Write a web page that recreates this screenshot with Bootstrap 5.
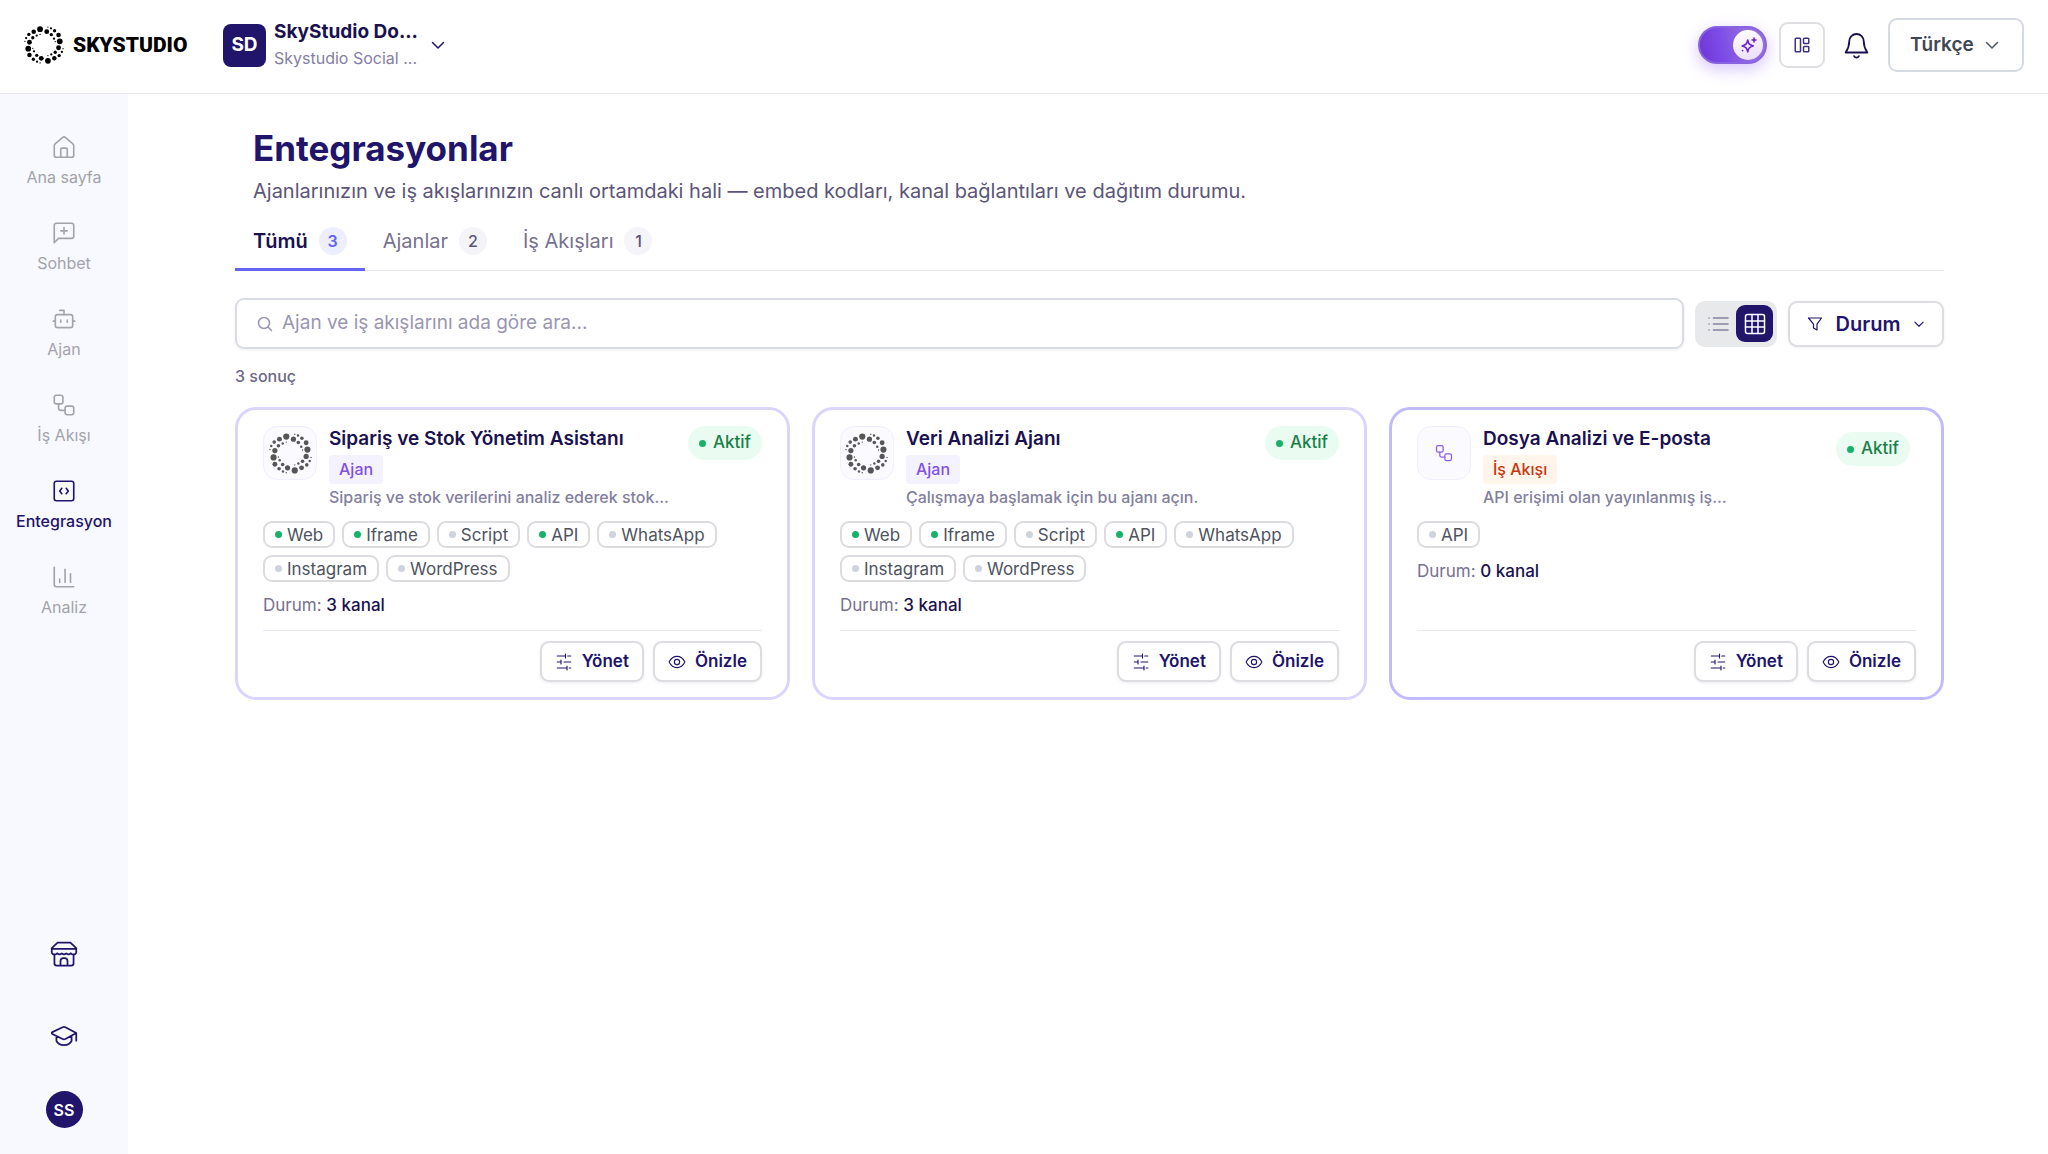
<!DOCTYPE html>
<html lang="tr">
<head>
<meta charset="utf-8">
<meta name="viewport" content="width=device-width, initial-scale=1">
<title>SkyStudio – Entegrasyonlar</title>
<link href="https://cdn.jsdelivr.net/npm/bootstrap@5.3.0/dist/css/bootstrap.min.css" rel="stylesheet">
<style>
  :root { --navy: #21146b; --ink: #1a1150; --muted: #8480a1; --line: #e8e7f1; }
  body { font-family: Inter, "Open Sans", sans-serif; color: var(--ink); background: #fff; }
  svg { flex: none; fill: none; stroke: currentColor; stroke-width: 1.5; stroke-linecap: round; stroke-linejoin: round; }
  .ring-art { fill: currentColor; stroke: none; }
  .thick { stroke-width: 2; }
  .thin { stroke-width: 1.2; }
  a { text-decoration: none; }

  /* top bar */
  .topbar { min-height: 94px; padding: 0 24px 3px 24px; border-bottom: 1px solid var(--line); }
  .brand { gap: 9px; color: #000; font-family: Roboto, sans-serif; font-size: 21px; font-weight: 900; line-height: 26px; width: 199px; white-space: nowrap; }
  .workspace { gap: 8px; background: none; border: 0; padding: 0; text-align: left; color: var(--navy); }
  .ws-tile { width: 43px; height: 43px; border-radius: 8px; background: var(--navy); color: #fff; font-size: 19px; font-weight: 700; }
  .ws-name { font-size: 19px; font-weight: 700; line-height: 26px; color: var(--ink); }
  .ws-sub { font-size: 16px; line-height: 26px; color: var(--muted); }
  .ai-switch { width: 69px; height: 38px; border: 2px solid #8a63e0; border-radius: 19px; padding: 0 2px; background: linear-gradient(75deg, #6d35d3, #7d4ce8 35%, #9370db 75%); box-shadow: 0 5px 16px rgba(124, 58, 237, .3); }
  .ai-knob { width: 30px; height: 30px; border-radius: 50%; background: linear-gradient(160deg, #fff, #eadcfd); color: #6a1fd8; }
  .sq-btn { width: 46px; height: 46px; border: 2px solid #dfdfe3; border-radius: 9px; background: #fff; color: #3e327f; }
  .bell { width: 63px; background: none; border: 0; color: var(--ink); }
  .lang { width: 136px; height: 54px; border: 2px solid #d6dae1; border-radius: 9px; padding: 0 44px 0 20px; font-size: 19px; font-weight: 600; color: #3f4654;
    background-image: url("data:image/svg+xml,%3Csvg xmlns='http://www.w3.org/2000/svg' viewBox='0 0 16 16' fill='none' stroke='%23555c69' stroke-width='1.6' stroke-linecap='round' stroke-linejoin='round'%3E%3Cpath d='M2.5 5.5 8 11l5.500-5.500'/%3E%3C/svg%3E"); background-size: 16px; background-position: right 22px center; }

  /* side bar */
  .sidebar { width: 128px; flex: none; background: #f8f9fe; min-height: calc(100vh - 94px); padding: 40px 0 26px; }
  .side-nav { gap: 32px; }
  .side-link { gap: 6px; color: #a3a3ab; font-size: 16px; font-weight: 400; line-height: 22px; }
  .side-link svg { width: 28px; height: 26px; }
  .side-link.active { color: var(--navy); font-weight: 500; }
  .side-tools { gap: 28px; }
  .side-tool { height: 54px; color: var(--navy); }
  .user-dot { width: 37px; height: 37px; border-radius: 50%; border: 0; background: var(--navy); color: #fff; font-size: 16px; font-weight: 600; }

  /* page */
  .page { padding: 31px 104px 40px 107px; }
  .page-title { margin: 0; padding-left: 18px; font-size: 35px; font-weight: 700; line-height: 46px; color: var(--navy); }
  .page-note { margin: 6px 0 0; padding-left: 18px; font-size: 20px; line-height: 28px; color: #5b5579; }
  .tabs { margin-top: 8px; border-bottom: 1px solid var(--line); }
  .tabs a { gap: 11px; margin-bottom: -1px; padding: 14px 18px 13px; border-bottom: 3px solid transparent; font-size: 20px; line-height: 28px; color: #77728f; font-weight: 400; }
  .tabs a.active { color: var(--ink); font-weight: 600; border-color: #6563f1; }
  .tabs .count { min-width: 28px; height: 28px; border-radius: 14px; background: #f5f4f9; color: #5b5579; font-size: 16px; font-weight: 500; text-align: center; }
  .tabs .active .count { background: #edeefe; color: #6563f1; font-weight: 600; }
  .tools { margin-top: 27px; gap: 11px; }
  .search { height: 51px; gap: 9px; padding: 0 20px; border: 2px solid #d9dde3; border-radius: 9px; color: #9a96b0; box-shadow: 0 1px 3px rgba(16, 24, 40, .08); }
  .search input { border: 0; outline: 0; padding: 0; font-size: 19px; background: none; color: var(--ink); }
  .search input::placeholder { color: #9a96b0; opacity: 1; }
  .views { height: 46px; padding: 4px; border-radius: 10px; background: #e8e9eb; }
  .views button { width: 37px; height: 37px; border: 0; border-radius: 9px; background: none; color: #8681a3; }
  .views button.active { background: var(--navy); color: #fff; }
  .filter-btn { height: 46px; width: 156px; padding: 0 17px; border: 2px solid #dcdce1; border-radius: 9px; background: #fff; color: var(--navy); font-size: 20px; font-weight: 600; box-shadow: 0 1px 3px rgba(16, 24, 40, .06); }
  .results { margin: 16px 0 20px; font-size: 16px; line-height: 22px; font-weight: 500; color: #6d6888; }

  /* integration cards */
  .deck { --bs-gutter-x: 22px; --bs-gutter-y: 22px; }
  .tile { padding: 16px 25px 15px; border: 3px solid #dad5fd; border-radius: 21px; }
  .tile.flow { border-color: #c2bbfb; }
  .tile-top { gap: 12px; }
  .avatar { width: 54px; height: 54px; flex: none; border: 1px solid #f1eefe; border-radius: 14px; background: #fafaff; color: #565656; }
  .flow .avatar { color: #8b5cf0; }
  .tile-name { margin: 0; font-size: 19px; font-weight: 600; line-height: 26px; color: var(--ink); }
  .kind { margin-top: 3px; padding: 0 10px; border-radius: 4px; font-size: 16px; font-weight: 500; line-height: 29px; background: #f4f2fe; color: #8350e0; }
  .flow .kind { background: #fff5ea; color: #c8360f; }
  .tile-note { margin: 2px 0 0; font-size: 16px; font-weight: 500; line-height: 22px; color: #837f9e; }
  .state { gap: 7px; height: 34px; padding: 0 11px; border-radius: 17px; background: #eafcf2; color: #1b8048; font-size: 17px; font-weight: 500; }
  .flow .state { margin: 6px 6px 0 0; }
  .dot { width: 7px; height: 7px; border-radius: 50%; background: #cfd3de; flex: none; }
  .dot.on { background: #17b26a; }
  .chips { margin-top: 13px; gap: 7px; }
  .chip { gap: 5px; height: 27px; padding: 0 10px; border: 2px solid #dcdce0; border-radius: 9px; color: #4e5361; font-size: 17px; line-height: 22px; font-weight: 400; }
  .total { margin: 12px 0 14px; font-size: 17px; line-height: 22px; font-weight: 400; color: #77728f; }
  .total b { color: var(--ink); font-weight: 500; }
  .tile-foot { border-top: 1px solid var(--line); padding-top: 10px; gap: 9px; }
  .act { height: 41px; gap: 9px; padding: 0 13px; border: 2px solid #dcdce1; border-radius: 9px; background: #fff; color: var(--navy); font-size: 17px; font-weight: 600; box-shadow: 0 1px 3px rgba(16, 24, 40, .08); }
</style>
<script src="https://cdn.jsdelivr.net/npm/bootstrap@5.3.0/dist/js/bootstrap.bundle.min.js"></script>
</head>
<body>

<svg class="d-none" aria-hidden="true">
  <defs>
    <g id="ring-half">
      <circle cx="73" cy="33" r="9.500"/><circle cx="52" cy="41" r="7.500"/><circle cx="36" cy="50" r="5.500"/><circle cx="27" cy="62" r="3.800"/><circle cx="23" cy="73" r="2.200"/>
      <circle cx="38" cy="76" r="8"/><circle cx="49" cy="61" r="5.500"/><circle cx="62" cy="54" r="3.800"/><circle cx="73" cy="50" r="2.200"/>
      <circle cx="95" cy="41" r="8"/><circle cx="110" cy="51" r="5.500"/><circle cx="119" cy="64" r="3.800"/><circle cx="123" cy="74" r="2.200"/>
      <circle cx="138" cy="73" r="9.500"/><circle cx="134" cy="52" r="7.500"/><circle cx="121" cy="38" r="5.500"/><circle cx="109" cy="30" r="3.800"/><circle cx="99" cy="26" r="2.200"/>
    </g>
    <symbol id="ring" viewBox="20 19 132 132"><use href="#ring-half"/><use href="#ring-half" transform="rotate(180 86 85)"/></symbol>
    <symbol id="flow" viewBox="0 0 24 24"><rect x="3" y="3" width="8" height="8" rx="2"/><path d="M7 11v4a2 2 0 0 0 2 2h4"/><rect x="13" y="13" width="8" height="8" rx="2"/></symbol>
    <symbol id="sliders" viewBox="0 0 24 24"><path d="M3 4h10M17 4h4M3 12h5M12 12h9M3 20h12M19 20h2M14 1.500v5M8 9.500v5M16 17.500v5"/></symbol>
    <symbol id="eye" viewBox="0 0 24 24"><path d="M1.500 12C4 7 7.500 4.500 12 4.500S20 7 22.500 12C20 17 16.500 19.500 12 19.500S4 17 1.500 12z"/><circle cx="12" cy="12" r="3.500"/></symbol>
    <symbol id="down" viewBox="0 0 16 16"><path d="M2.500 5.500 8 11l5.500-5.500"/></symbol>
  </defs>
</svg>

<header class="topbar d-flex align-items-center">
  <a href="#" class="brand d-flex align-items-center">
    <svg class="ring-art" width="40" height="40"><use href="#ring"/></svg><span>SKYSTUDIO</span>
  </a>
  <button type="button" class="workspace d-flex align-items-center">
    <span class="ws-tile d-flex align-items-center justify-content-center">SD</span>
    <span class="d-block"><span class="ws-name d-block">SkyStudio Do...</span><span class="ws-sub d-block">Skystudio Social ...</span></span>
    <svg width="16" height="16" class="ms-1"><use href="#down"/></svg>
  </button>
  <div class="d-flex align-items-center ms-auto">
    <button type="button" role="switch" aria-checked="true" aria-label="Yapay zekâ" class="ai-switch d-flex align-items-center justify-content-end me-2">
      <span class="ai-knob d-flex align-items-center justify-content-center">
        <svg class="thick" width="19" height="19" viewBox="0 0 24 24"><path d="M11 5c.8 4.500 2 6.200 7 7.500-5 1.300-6.200 3-7 7.500-.8-4.500-2-6.200-7-7.500 5-1.300 6.200-3 7-7.500zM19 2.500v5M16.500 5h5M4.500 18.500h.1"/></svg>
      </span>
    </button>
    <button type="button" class="sq-btn d-flex align-items-center justify-content-center ms-1" aria-label="Düzen">
      <svg class="thick" width="18" height="18" viewBox="0 0 24 24"><rect x="3" y="3" width="7" height="18" rx="1"/><rect x="14" y="3" width="7" height="7" rx="1"/><rect x="14" y="14" width="7" height="7" rx="1"/></svg>
    </button>
    <button type="button" class="bell d-flex justify-content-center p-0" aria-label="Bildirimler">
      <svg width="29" height="29" viewBox="0 0 24 24"><path d="M6 8.500a6 6 0 0 1 12 0c0 5 1.500 7 3 9.300H3c1.500-2.300 3-4.300 3-9.300zM10 20.800a2.300 2.300 0 0 0 4 0"/></svg>
    </button>
    <select class="lang form-select" aria-label="Dil"><option>Türkçe</option></select>
  </div>
</header>

<div class="d-flex">
  <aside class="sidebar d-flex flex-column justify-content-between">
    <nav class="side-nav d-flex flex-column">
      <a href="#" class="side-link d-flex flex-column align-items-center"><svg viewBox="0 0 24 24"><path d="M3 11a3 3 0 0 1 1-2.200l6.600-5.500a2.200 2.200 0 0 1 2.800 0L20 8.800A3 3 0 0 1 21 11v8.500a2 2 0 0 1-2 2H5a2 2 0 0 1-2-2zM9 21.500V14a1 1 0 0 1 1-1h4a1 1 0 0 1 1 1v7.500"/></svg>Ana sayfa</a>
      <a href="#" class="side-link d-flex flex-column align-items-center"><svg viewBox="0 0 24 24"><path d="M21 15a2 2 0 0 1-2 2H7l-4 4V5a2 2 0 0 1 2-2h14a2 2 0 0 1 2 2zM12 7v6M9 10h6"/></svg>Sohbet</a>
      <a href="#" class="side-link d-flex flex-column align-items-center"><svg viewBox="0 0 24 24"><path d="M12 8V4H8M2 14h2M20 14h2M15 13v2M9 13v2"/><rect x="4" y="8" width="16" height="12" rx="2"/></svg>Ajan</a>
      <a href="#" class="side-link d-flex flex-column align-items-center"><svg><use href="#flow"/></svg>İş Akışı</a>
      <a href="#" class="side-link active d-flex flex-column align-items-center" aria-current="page"><svg viewBox="0 0 24 24"><rect x="3" y="3" width="18" height="18" rx="2"/><path d="m10 9.500-2 2.500 2 2.500M14 9.500l2 2.500-2 2.500"/></svg>Entegrasyon</a>
      <a href="#" class="side-link d-flex flex-column align-items-center"><svg viewBox="0 0 24 24"><path d="M3 3v16a2 2 0 0 0 2 2h16M8 17v-3M13 17V5M18 17V9"/></svg>Analiz</a>
    </nav>
    <div class="side-tools d-flex flex-column align-items-center">
      <a href="#" class="side-tool d-flex align-items-center" aria-label="Mağaza"><svg width="28" height="28" viewBox="0 0 24 24"><path d="M6.500 2.200h11L22.500 7v3.200a2.200 2.200 0 0 1-2.400 2.200 2.600 2.600 0 0 1-2.300-1 2.800 2.800 0 0 1-3.900 0 2.800 2.800 0 0 1-3.800 0 2.800 2.800 0 0 1-3.900 0 2.600 2.600 0 0 1-2.300 1A2.200 2.200 0 0 1 1.500 10.200V7zM1.800 7.500h20.400M3.800 12.500V20a2 2 0 0 0 2 2h12.400a2 2 0 0 0 2-2v-7.500M9 22v-4a2.500 2.500 0 0 1 2.500-2.500h1A2.500 2.500 0 0 1 15 18v4"/></svg></a>
      <a href="#" class="side-tool d-flex align-items-center" aria-label="Akademi"><svg width="28" height="28" viewBox="0 0 24 24"><path d="M22.500 9.500 13.200 4.500a2.800 2.800 0 0 0-2.400 0L2 8.700a.9.9 0 0 0 0 1.600l8.800 4.300a2.800 2.800 0 0 0 2.400 0zM22.500 9.500V16M5.500 12v4.200C6.500 18.500 9 19.800 12 19.800s5.500-1.300 6.500-3.600V12"/></svg></a>
      <button type="button" class="user-dot d-flex align-items-center justify-content-center p-0">SS</button>
    </div>
  </aside>

  <main class="page flex-grow-1">
    <h1 class="page-title">Entegrasyonlar</h1>
    <p class="page-note">Ajanlarınızın ve iş akışlarınızın canlı ortamdaki hali — embed kodları, kanal bağlantıları ve dağıtım durumu.</p>

    <nav class="tabs d-flex">
      <a href="#" class="active d-flex" aria-current="true">Tümü <span class="count">3</span></a>
      <a href="#" class="d-flex">Ajanlar <span class="count">2</span></a>
      <a href="#" class="d-flex">İş Akışları <span class="count">1</span></a>
    </nav>

    <div class="tools d-flex align-items-center">
      <label class="search d-flex align-items-center flex-grow-1">
        <svg width="16" height="16" viewBox="0 0 16 16"><circle cx="7" cy="7" r="5.500"/><path d="m11.500 11.500 3 3"/></svg>
        <input type="search" class="flex-grow-1" placeholder="Ajan ve iş akışlarını ada göre ara..." aria-label="Ara">
      </label>
      <div class="views d-flex align-items-center" role="group" aria-label="Görünüm">
        <button type="button" class="d-flex align-items-center justify-content-center p-0" aria-label="Liste"><svg width="24" height="24" viewBox="0 0 24 24"><path d="M7.500 6H22M7.500 12H22M7.500 18H22M3 6h.1M3 12h.1M3 18h.1"/></svg></button>
        <button type="button" class="active d-flex align-items-center justify-content-center p-0" aria-label="Izgara"><svg width="24" height="24" viewBox="0 0 24 24"><rect x="2.500" y="2.500" width="19" height="19" rx="2"/><path d="M2.500 9h19M2.500 15h19M9 2.500v19M15 2.500v19"/></svg></button>
      </div>
      <button type="button" class="filter-btn d-flex align-items-center justify-content-between">
        <svg class="thin" width="16" height="16" viewBox="0 0 16 16"><path d="M1.500 2h13L10 8.200V14l-3.500-2V8.200z"/></svg>Durum<svg width="12" height="12"><use href="#down"/></svg>
      </button>
    </div>

    <p class="results">3 sonuç</p>

    <div class="deck row row-cols-1 row-cols-lg-3">
      <div class="col">
        <article class="tile h-100 d-flex flex-column">
          <div class="tile-top d-flex align-items-start">
            <span class="avatar d-flex align-items-center justify-content-center"><svg class="ring-art" width="43" height="43"><use href="#ring"/></svg></span>
            <div class="flex-grow-1"><h2 class="tile-name">Sipariş ve Stok Yönetim Asistanı</h2><span class="kind d-inline-block align-top">Ajan</span><p class="tile-note">Sipariş ve stok verilerini analiz ederek stok...</p></div>
            <span class="state d-flex align-items-center"><i class="dot on"></i>Aktif</span>
          </div>
          <div class="chips d-flex flex-wrap">
            <span class="chip d-flex align-items-center"><i class="dot on"></i>Web</span>
            <span class="chip d-flex align-items-center"><i class="dot on"></i>Iframe</span>
            <span class="chip d-flex align-items-center"><i class="dot"></i>Script</span>
            <span class="chip d-flex align-items-center"><i class="dot on"></i>API</span>
            <span class="chip d-flex align-items-center"><i class="dot"></i>WhatsApp</span>
            <span class="chip d-flex align-items-center"><i class="dot"></i>Instagram</span>
            <span class="chip d-flex align-items-center"><i class="dot"></i>WordPress</span>
          </div>
          <p class="total">Durum: <b>3 kanal</b></p>
          <div class="tile-foot mt-auto d-flex justify-content-end">
            <button type="button" class="act d-flex align-items-center"><svg width="18" height="18"><use href="#sliders"/></svg>Yönet</button>
            <button type="button" class="act d-flex align-items-center"><svg width="18" height="18"><use href="#eye"/></svg>Önizle</button>
          </div>
        </article>
      </div>
      <div class="col">
        <article class="tile h-100 d-flex flex-column">
          <div class="tile-top d-flex align-items-start">
            <span class="avatar d-flex align-items-center justify-content-center"><svg class="ring-art" width="43" height="43"><use href="#ring"/></svg></span>
            <div class="flex-grow-1"><h2 class="tile-name">Veri Analizi Ajanı</h2><span class="kind d-inline-block align-top">Ajan</span><p class="tile-note">Çalışmaya başlamak için bu ajanı açın.</p></div>
            <span class="state d-flex align-items-center"><i class="dot on"></i>Aktif</span>
          </div>
          <div class="chips d-flex flex-wrap">
            <span class="chip d-flex align-items-center"><i class="dot on"></i>Web</span>
            <span class="chip d-flex align-items-center"><i class="dot on"></i>Iframe</span>
            <span class="chip d-flex align-items-center"><i class="dot"></i>Script</span>
            <span class="chip d-flex align-items-center"><i class="dot on"></i>API</span>
            <span class="chip d-flex align-items-center"><i class="dot"></i>WhatsApp</span>
            <span class="chip d-flex align-items-center"><i class="dot"></i>Instagram</span>
            <span class="chip d-flex align-items-center"><i class="dot"></i>WordPress</span>
          </div>
          <p class="total">Durum: <b>3 kanal</b></p>
          <div class="tile-foot mt-auto d-flex justify-content-end">
            <button type="button" class="act d-flex align-items-center"><svg width="18" height="18"><use href="#sliders"/></svg>Yönet</button>
            <button type="button" class="act d-flex align-items-center"><svg width="18" height="18"><use href="#eye"/></svg>Önizle</button>
          </div>
        </article>
      </div>
      <div class="col">
        <article class="tile flow h-100 d-flex flex-column">
          <div class="tile-top d-flex align-items-start">
            <span class="avatar d-flex align-items-center justify-content-center"><svg width="20" height="20"><use href="#flow"/></svg></span>
            <div class="flex-grow-1"><h2 class="tile-name">Dosya Analizi ve E-posta</h2><span class="kind d-inline-block align-top">İş Akışı</span><p class="tile-note">API erişimi olan yayınlanmış iş...</p></div>
            <span class="state d-flex align-items-center"><i class="dot on"></i>Aktif</span>
          </div>
          <div class="chips d-flex flex-wrap">
            <span class="chip d-flex align-items-center"><i class="dot"></i>API</span>
          </div>
          <p class="total">Durum: <b>0 kanal</b></p>
          <div class="tile-foot mt-auto d-flex justify-content-end">
            <button type="button" class="act d-flex align-items-center"><svg width="18" height="18"><use href="#sliders"/></svg>Yönet</button>
            <button type="button" class="act d-flex align-items-center"><svg width="18" height="18"><use href="#eye"/></svg>Önizle</button>
          </div>
        </article>
      </div>
    </div>
  </main>
</div>
</body>
</html>
